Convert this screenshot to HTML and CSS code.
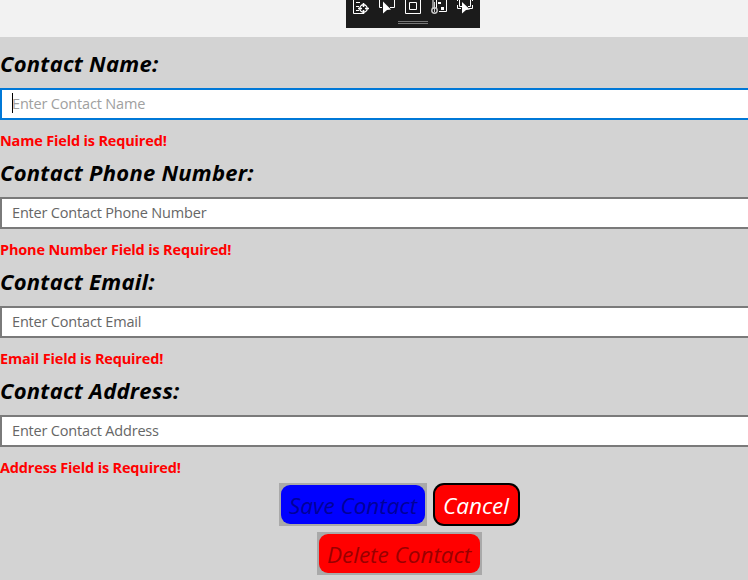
FILE: index.html
```html
<!DOCTYPE html>
<html lang="en">
<head>
<meta charset="utf-8">
<title>Contact</title>
<link rel="stylesheet" href="styles.css">
</head>
<body>
<header class="titlebar">
  <div class="debugbar">
    <svg class="tools" width="134" height="28" viewBox="0 0 134 28" fill="none" stroke="#fff" aria-hidden="true">
      <path d="M7.500 0V13.500H17M10 2.500H14M10 6.500H13M10 10.500H13"/>
      <circle cx="17.500" cy="8.500" r="3.700" stroke-width="1.400"/>
      <path stroke-width="1.600" d="M17.500 3V7M17.500 10V14M12 8.500H16M19 8.500H23"/>
      <path d="M33.500 0V7.500H36M48.500 0V7.500H44"/>
      <path fill="#fff" stroke="none" d="M37 1.500L45 9.500L41 10L37 13.500Z"/>
      <path d="M59.500 0V13.500H74.500V0M63.500 2.500H70.500V9.500H63.500Z"/>
      <path d="M87 0V9M90.500 0V9M93 11.500H100.500V0"/>
      <path fill="#fff" stroke="none" d="M92 2H95V4H92ZM95 7H98V10H95Z"/>
      <circle cx="88.500" cy="10.500" r="2.700" stroke="#ccc" stroke-width="1.400"/>
      <path stroke="#ccc" d="M88.500 2V12"/>
      <path d="M113.500 0V6.500H117M122 6.500H124.500V0M111.500 0V1M111.500 5V8.500H115M123 8.500H126.500V5M126.500 0V1"/>
      <path fill="#fff" stroke="none" d="M116 2L124 9.500L120 10L116 13.500Z"/>
      <path stroke="#777" d="M52 21.500H82M52 23.500H82"/>
    </svg>
  </div>
</header>
<main class="form">
  <section class="field">
    <label class="label" for="name">Contact Name:</label>
    <div class="box focused"><input id="name" class="input" type="text" placeholder="Enter Contact Name"></div>
    <p class="error">Name Field is Required!</p>
  </section>
  <section class="field">
    <label class="label" for="phone">Contact Phone Number:</label>
    <div class="box"><input id="phone" class="input" type="text" placeholder="Enter Contact Phone Number"></div>
    <p class="error">Phone Number Field is Required!</p>
  </section>
  <section class="field">
    <label class="label" for="email">Contact Email:</label>
    <div class="box"><input id="email" class="input" type="text" placeholder="Enter Contact Email"></div>
    <p class="error">Email Field is Required!</p>
  </section>
  <section class="field">
    <label class="label" for="address">Contact Address:</label>
    <div class="box"><input id="address" class="input" type="text" placeholder="Enter Contact Address"></div>
    <p class="error">Address Field is Required!</p>
  </section>
  <div class="actions">
    <div class="row">
      <button class="btn save" disabled><span>Save Contact</span></button>
      <button class="btn cancel"><span>Cancel</span></button>
    </div>
    <div class="row">
      <button class="btn delete" disabled><span>Delete Contact</span></button>
    </div>
  </div>
</main>
</body>
</html>
```
FILE: styles.css
```css
* { box-sizing: border-box; }
body {
  margin: 0;
  height: 580px;
  overflow: hidden;
  background: #d3d3d3;
  font-family: "Open Sans", "Noto Sans", sans-serif;
}
.titlebar { height: 37px; background: #f2f2f2; padding-left: 346px; }
.debugbar { width: 134px; height: 28px; background: #1b1b1b; }
.tools { display: block; }
.form { padding-top: 9px; }
.field { height: 109px; display: flex; flex-direction: column; }
.label {
  height: 42px;
  line-height: 34px;
  font-size: 22px;
  letter-spacing: 0.25px;
  font-weight: 700;
  font-style: italic;
  color: #000;
  white-space: nowrap;
}
.box {
  position: relative;
  height: 32px;
  width: 760px;
  border: 2px solid #7a7a7a;
  background: #fff;
}
.focused { border-color: #0078d7; }
.focused::before {
  content: "";
  position: absolute;
  left: 10px;
  top: 3px;
  width: 1px;
  height: 20px;
  background: #000;
}
.input {
  display: block;
  width: 100%;
  height: 28px;
  padding: 0 0 0 10px;
  border: 0;
  outline: 0;
  background: transparent;
  font: 400 14.5px/28px "Open Sans", "Noto Sans", sans-serif;
  letter-spacing: -0.18px;
}
.input::placeholder { color: #666; opacity: 1; }
.focused .input::placeholder { color: #a0a0a0; }
.error {
  margin: 11px 0 0;
  line-height: 20px;
  font-size: 14.5px;
  letter-spacing: -0.17px;
  font-weight: 700;
  color: #f00;
  white-space: nowrap;
}
.actions { display: flex; flex-direction: column; gap: 6px; padding-top: 1px; }
.row { display: flex; justify-content: center; gap: 6px; margin-left: 51px; }
.btn {
  height: 43px;
  padding: 2px;
  border: 0;
  font: italic 400 22.5px/41px "Open Sans", "Noto Sans", sans-serif;
  white-space: nowrap;
}
.btn span { display: block; height: 39px; border-radius: 9px; padding-left: 8px; text-align: left; }
.save { width: 148px; background: #a9a9a9; color: #000099; }
.save span { background: #00f; }
.cancel { width: 87px; background: #000; color: #fff; border-radius: 11px; }
.cancel span { background: #f00; }
.delete { width: 165px; background: #a9a9a9; color: #990000; }
.delete span { background: #f00; }
```
